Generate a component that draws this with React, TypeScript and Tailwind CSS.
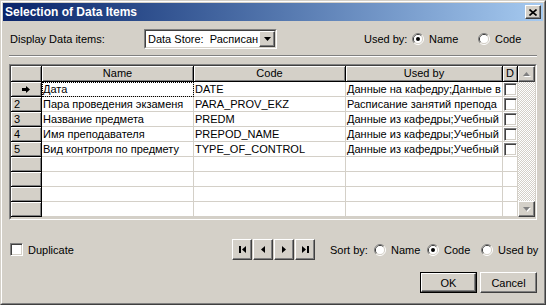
import React from "react";

const raised =
  "border border-t-white border-l-white border-r-[#404040] border-b-[#404040] shadow-[inset_-1px_-1px_0_#808080,inset_1px_1px_0_#d4d0c8]";
const fixedCell =
  "bg-[#d4d0c8] border-r border-b border-r-black border-b-black shadow-[inset_1px_1px_0_#fff,inset_-1px_-1px_0_#808080]";
const dataCell = "bg-white border-r border-b border-r-[#d4d0c8] border-b-[#d4d0c8] overflow-hidden whitespace-nowrap";

const rows = [
  ["Дата", "DATE", "Данные на кафедру;Данные в"],
  ["Пара проведения экзаменя", "PARA_PROV_EKZ", "Расписание занятий препода"],
  ["Название предмета", "PREDM", "Данные из кафедры;Учебный"],
  ["Имя преподавателя", "PREPOD_NAME", "Данные из кафедры;Учебный"],
  ["Вид контроля по предмету", "TYPE_OF_CONTROL", "Данные из кафедры;Учебный"],
];

function Radio({ checked = false }: { checked?: boolean }) {
  return (
    <svg width="12" height="12" viewBox="0 0 12 12" className="shrink-0">
      <path d="M2.11 9.89 A5.5 5.5 0 0 1 9.89 2.11" fill="none" stroke="#808080" />
      <path d="M9.89 2.11 A5.5 5.5 0 0 1 2.11 9.89" fill="none" stroke="#fff" />
      <path d="M2.82 9.18 A4.5 4.5 0 0 1 9.18 2.82" fill="none" stroke="#404040" />
      <path d="M9.18 2.82 A4.5 4.5 0 0 1 2.82 9.18" fill="none" stroke="#d4d0c8" />
      <circle cx="6" cy="6" r="4" fill="#fff" />
      {checked && <circle cx="6" cy="6" r="2" fill="#000" />}
    </svg>
  );
}

function CheckBox() {
  return (
    <div className="w-[13px] h-[13px] shrink-0 border border-t-[#808080] border-l-[#808080] border-r-white border-b-white bg-white shadow-[inset_1px_1px_0_#404040,inset_-1px_-1px_0_#d4d0c8]" />
  );
}

function RadioItem({ label, checked, width }: { label: string; checked?: boolean; width: string }) {
  return (
    <div className={`flex items-center gap-[5px] whitespace-nowrap ${width}`}>
      <Radio checked={checked} />
      <span>{label}</span>
    </div>
  );
}

function NavButton({ children }: { children: React.ReactNode }) {
  return (
    <div className={`w-[20px] h-[21px] flex items-center justify-center bg-[#d4d0c8] ${raised}`}>
      {children}
    </div>
  );
}

export default function App() {
  return (
    <div className="w-[546px] h-[305px] font-['Liberation_Sans',Arial,sans-serif] text-[11px] leading-[14px] text-black">
      <div className="w-full h-full border border-t-[#d4d0c8] border-l-[#d4d0c8] border-r-[#404040] border-b-[#404040]">
        <div className="w-full h-full border border-t-white border-l-white border-r-[#808080] border-b-[#808080] bg-[#d4d0c8] p-px flex flex-col">
          {/* title bar */}
          <div className="h-[18px] shrink-0 flex items-center bg-linear-to-r from-[#0a246a] to-[#a6caf0] pl-[2px] pr-[2px]">
            <span className="flex-1 text-white font-bold text-[12px]">Selection of Data Items</span>
            <div className={`w-[16px] h-[14px] flex items-center justify-center bg-[#d4d0c8] ${raised}`}>
              <svg width="8" height="7" viewBox="0 0 8 7">
                <path d="M0.5 0.5 L7.5 6.5 M7.5 0.5 L0.5 6.5" stroke="#000" strokeWidth="1.6" />
              </svg>
            </div>
          </div>

          <div className="flex flex-col pl-[6px] pr-[6px]">
            {/* display row */}
            <div className="mt-[8px] h-[20px] flex items-center whitespace-nowrap">
              <span className="w-[135px] pl-px">Display Data items:</span>
              <div className="w-[133px] h-[20px] border border-t-[#808080] border-l-[#808080] border-r-white border-b-white">
                <div className="w-full h-full border border-t-[#404040] border-l-[#404040] border-r-[#d4d0c8] border-b-[#d4d0c8] bg-white flex items-center">
                  <span className="flex-1 pl-[2px] overflow-hidden whitespace-pre">Data Store:  Расписан</span>
                  <div className={`w-[16px] h-[16px] shrink-0 flex items-center justify-center bg-[#d4d0c8] ${raised}`}>
                    <svg width="7" height="4" viewBox="0 0 7 4">
                      <polygon points="0,0 7,0 3.5,4" fill="#000" />
                    </svg>
                  </div>
                </div>
              </div>
              <span className="ml-[87px] w-[48px]">Used by:</span>
              <RadioItem label="Name" checked width="w-[66px]" />
              <RadioItem label="Code" width="w-[50px]" />
            </div>

            {/* separator */}
            <div className="mt-[6px] h-[2px] border-t border-t-[#808080] border-b border-b-white" />

            {/* grid */}
            <div className="mt-[7px] h-[156px] w-[528px] border border-t-[#808080] border-l-[#808080] border-r-white border-b-white">
              <div className="w-full h-full border border-t-[#404040] border-l-[#404040] border-r-[#d4d0c8] border-b-[#d4d0c8] bg-[#d4d0c8] flex">
                <div className="w-[507px] flex flex-col">
                  <div className="h-[16px] flex">
                    <div className={`w-[31px] ${fixedCell}`} />
                    <div className={`w-[152px] text-center ${fixedCell}`}>Name</div>
                    <div className={`w-[152px] text-center ${fixedCell}`}>Code</div>
                    <div className={`w-[157px] text-center ${fixedCell}`}>Used by</div>
                    <div className={`w-[15px] text-center ${fixedCell}`}>D</div>
                  </div>
                  {Array.from({ length: 9 }).map((_, i) => {
                    const r = rows[i];
                    return (
                      <div key={i} className="h-[15px] flex">
                        <div className={`w-[31px] flex items-center ${fixedCell} ${i === 0 ? "justify-center" : "pl-[3px]"}`}>
                          {i === 0 ? (
                            <svg width="8" height="7" viewBox="0 0 8 7">
                              <path d="M0 2h4V0l4 3.5-4 3.5V5H0z" fill="#000" />
                            </svg>
                          ) : r ? (
                            <span>{i + 1}</span>
                          ) : null}
                        </div>
                        <div
                          className={`w-[152px] pl-px ${dataCell} ${i === 0 ? "outline-1 outline-dotted outline-black -outline-offset-1" : ""}`}
                        >
                          {r ? r[0] : ""}
                        </div>
                        <div className={`w-[152px] pl-px ${dataCell}`}>{r ? r[1] : ""}</div>
                        <div className={`w-[157px] pl-px ${dataCell}`}>{r ? r[2] : ""}</div>
                        <div className={`w-[15px] pl-px pt-[1px] ${dataCell}`}>{r ? <CheckBox /> : null}</div>
                      </div>
                    );
                  })}
                </div>
                {/* scrollbar */}
                <div className="w-[17px] flex flex-col pb-px">
                  <div className={`h-[16px] flex items-center justify-center bg-[#d4d0c8] ${raised}`}>
                    <svg width="8" height="5" viewBox="0 0 8 5">
                      <polygon points="1,5 8,5 4.5,1" fill="#fff" />
                      <polygon points="0,4 7,4 3.5,0" fill="#808080" />
                    </svg>
                  </div>
                  <div className="flex-1 bg-[repeating-conic-gradient(#d4d0c8_0_25%,#fff_0_50%)] bg-[length:2px_2px]" />
                  <div className={`h-[16px] flex items-center justify-center bg-[#d4d0c8] ${raised}`}>
                    <svg width="8" height="5" viewBox="0 0 8 5">
                      <polygon points="1,1 8,1 4.5,5" fill="#fff" />
                      <polygon points="0,0 7,0 3.5,4" fill="#808080" />
                    </svg>
                  </div>
                </div>
              </div>
            </div>

            {/* bottom row */}
            <div className="mt-[19px] h-[21px] flex items-center whitespace-nowrap">
              <div className="w-[223px] flex items-center pl-px gap-[5px]">
                <CheckBox />
                <span>Duplicate</span>
              </div>
              <div className="flex gap-px">
                <NavButton>
                  <svg width="7" height="7" viewBox="0 0 7 7">
                    <rect x="0" y="0" width="2" height="7" fill="#000" />
                    <polygon points="7,0 3,3.5 7,7" fill="#000" />
                  </svg>
                </NavButton>
                <NavButton>
                  <svg width="4" height="7" viewBox="0 0 4 7">
                    <polygon points="4,0 0,3.5 4,7" fill="#000" />
                  </svg>
                </NavButton>
                <NavButton>
                  <svg width="4" height="7" viewBox="0 0 4 7">
                    <polygon points="0,0 4,3.5 0,7" fill="#000" />
                  </svg>
                </NavButton>
                <NavButton>
                  <svg width="7" height="7" viewBox="0 0 7 7">
                    <polygon points="0,0 4,3.5 0,7" fill="#000" />
                    <rect x="5" y="0" width="2" height="7" fill="#000" />
                  </svg>
                </NavButton>
              </div>
              <span className="ml-[15px] w-[44px]">Sort by:</span>
              <RadioItem label="Name" width="w-[53px]" />
              <RadioItem label="Code" checked width="w-[54px]" />
              <RadioItem label="Used by" width="w-[56px]" />
            </div>

            {/* buttons */}
            <div className="mt-[12px] h-[21px] flex justify-end gap-[3px]">
              <div className="w-[57px] h-[21px] border border-black">
                <div className={`w-full h-full flex items-center justify-center bg-[#d4d0c8] ${raised}`}>OK</div>
              </div>
              <div className={`w-[57px] h-[21px] flex items-center justify-center bg-[#d4d0c8] ${raised}`}>Cancel</div>
            </div>
          </div>
        </div>
      </div>
    </div>
  );
}
